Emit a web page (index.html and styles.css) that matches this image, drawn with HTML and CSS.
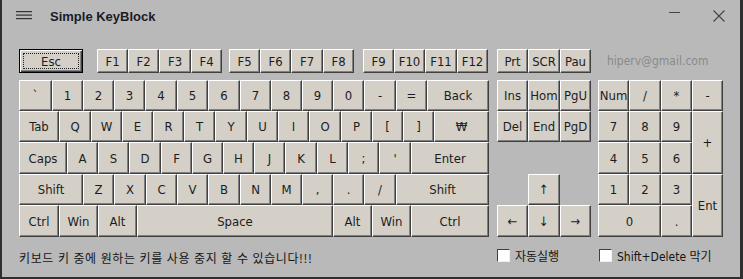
FILE: index.html
```html
<!DOCTYPE html>
<html lang="ko">
<head>
<meta charset="utf-8">
<title>Simple KeyBlock</title>
<link rel="stylesheet" href="styles.css">
</head>
<body>
<div class="window">
  <header class="titlebar">
    <svg class="menu-icon" width="16" height="10" viewBox="0 0 16 10"><rect x="0" y="0" width="16" height="1.2" fill="#333"/><rect x="0" y="3.5" width="16" height="1.2" fill="#333"/><rect x="0" y="7" width="16" height="1.2" fill="#333"/></svg>
    <span class="title">Simple KeyBlock</span>
    <span class="spacer"></span>
    <svg class="min-icon" width="12" height="12" viewBox="0 0 12 12"><rect x="0" y="5" width="11" height="1" fill="#444"/></svg>
    <svg class="close-icon" width="12" height="12" viewBox="0 0 12 12"><path d="M0.5 0.5 L11.5 11.5 M11.5 0.5 L0.5 11.5" stroke="#444" stroke-width="1.1" fill="none"/></svg>
  </header>
  <div class="content">
    <div class="frow">
      <div class="key esc">Esc</div>
      <div class="fgroup g1">
        <div class="key">F1</div><div class="key">F2</div><div class="key">F3</div><div class="key">F4</div>
      </div>
      <div class="fgroup g2">
        <div class="key">F5</div><div class="key">F6</div><div class="key">F7</div><div class="key">F8</div>
      </div>
      <div class="fgroup g3">
        <div class="key">F9</div><div class="key">F10</div><div class="key">F11</div><div class="key">F12</div>
      </div>
      <div class="sysgroup">
        <div class="key">Prt</div><div class="key">SCR</div><div class="key">Pau</div>
      </div>
      <span class="email">hiperv@gmail.com</span>
    </div>
    <div class="board">
      <div class="main">
        <div class="row r1">
          <div class="key">`</div><div class="key">1</div><div class="key">2</div><div class="key">3</div><div class="key">4</div><div class="key">5</div><div class="key">6</div><div class="key">7</div><div class="key">8</div><div class="key">9</div><div class="key">0</div><div class="key">-</div><div class="key">=</div><div class="key">Back</div>
        </div>
        <div class="row r2">
          <div class="key">Tab</div><div class="key">Q</div><div class="key">W</div><div class="key">E</div><div class="key">R</div><div class="key">T</div><div class="key">Y</div><div class="key">U</div><div class="key">I</div><div class="key">O</div><div class="key">P</div><div class="key">[</div><div class="key">]</div><div class="key">₩</div>
        </div>
        <div class="row r3">
          <div class="key">Caps</div><div class="key">A</div><div class="key">S</div><div class="key">D</div><div class="key">F</div><div class="key">G</div><div class="key">H</div><div class="key">J</div><div class="key">K</div><div class="key">L</div><div class="key">;</div><div class="key">'</div><div class="key">Enter</div>
        </div>
        <div class="row r4">
          <div class="key">Shift</div><div class="key">Z</div><div class="key">X</div><div class="key">C</div><div class="key">V</div><div class="key">B</div><div class="key">N</div><div class="key">M</div><div class="key">,</div><div class="key">.</div><div class="key">/</div><div class="key">Shift</div>
        </div>
        <div class="row r5">
          <div class="key">Ctrl</div><div class="key">Win</div><div class="key">Alt</div><div class="key">Space</div><div class="key">Alt</div><div class="key">Win</div><div class="key">Ctrl</div>
        </div>
      </div>
      <div class="nav">
        <div class="key">Ins</div><div class="key">Hom</div><div class="key">PgU</div>
        <div class="key">Del</div><div class="key">End</div><div class="key">PgD</div>
        <div class="key up">↑</div>
        <div class="key left">←</div><div class="key down">↓</div><div class="key right">→</div>
      </div>
      <div class="numpad">
        <div class="key">Num</div><div class="key">/</div><div class="key">*</div><div class="key">-</div>
        <div class="key">7</div><div class="key">8</div><div class="key">9</div><div class="key plus">+</div>
        <div class="key">4</div><div class="key">5</div><div class="key">6</div>
        <div class="key">1</div><div class="key">2</div><div class="key">3</div><div class="key ent">Ent</div>
        <div class="key zero">0</div><div class="key">.</div>
      </div>
    </div>
    <div class="footer">
      <span class="msg">키보드 키 중에 원하는 키를 사용 중지 할 수 있습니다!!!</span>
      <label class="check auto"><span class="box"></span>자동실행</label>
      <label class="check shiftdel"><span class="box"></span>Shift+Delete 막기</label>
    </div>
  </div>
</div>
</body>
</html>
```

FILE: styles.css
```css
* { box-sizing: border-box; }
html, body { margin: 0; padding: 0; }
body {
  width: 743px;
  height: 279px;
  background: #b9b9b9;
  font-family: "Liberation Sans", Arial, sans-serif;
  overflow: hidden;
}
.window {
  width: 743px;
  height: 279px;
  background: #b9b9b9;
  border-left: 2px solid #2f2f2f;
  border-right: 3px solid #2f2f2f;
  border-bottom: 2px solid #2f2f2f;
  display: flex;
  flex-direction: column;
}
.titlebar {
  height: 36px;
  display: flex;
  align-items: center;
  padding-left: 14px;
  padding-right: 15px;
}
.menu-icon { display: block; margin-top: -4px; }
.title {
  margin-left: 18px;
  margin-top: -4px;
  font: bold 13px "Liberation Sans", Arial, sans-serif;
  color: #1b1b28;
}
.spacer { flex: 1; }
.min-icon { display: block; margin-top: -10px; }
.close-icon { display: block; margin-left: 32px; margin-top: -4px; }

.content {
  padding-left: 17px;
  padding-top: 13px;
}

.key {
  background: #d4d0c8;
  border: 1px solid;
  border-color: #ffffff #404040 #404040 #ffffff;
  box-shadow: inset -1px -1px 0 #808080;
  display: flex;
  align-items: center;
  justify-content: center;
  font: 13px "Liberation Sans Narrow", "DejaVu Sans Condensed", "Liberation Sans", sans-serif;
  color: #1c1c1c;
  white-space: nowrap;
  height: 100%;
}

.frow {
  display: flex;
  height: 24px;
  align-items: stretch;
}
.esc {
  width: 64px;
  border-color: #000;
  box-shadow: inset 1px 1px 0 #fff, inset -1px -1px 0 #404040, inset -2px -2px 0 #808080;
  position: relative;
}
.esc::after {
  content: "";
  position: absolute;
  left: 3px; top: 3px; right: 3px; bottom: 3px;
  border: 1px dotted #222;
}
.fgroup {
  display: grid;
  grid-template-columns: 31px 31px 32px 31px;
}
.g1 { margin-left: 14px; }
.g2 { margin-left: 7px; }
.g3 { margin-left: 9px; }
.sysgroup {
  margin-left: 9px;
  display: grid;
  grid-template-columns: 31px 32px 31px;
}
.email {
  margin-left: 16px;
  align-self: center;
  font: 12px "Liberation Sans Narrow", "DejaVu Sans Condensed", "Liberation Sans", sans-serif;
  color: #8a8a8a;
  margin-top: -1px;
}

.board {
  margin-top: 7px;
  display: flex;
  height: 157px;
}
.main {
  width: 470px;
  display: grid;
  grid-template-rows: 31px 31px 32px 31px 32px;
}
.row { display: grid; }
.r1 { grid-template-columns: 33px 31px 31px 31px 32px 31px 32px 31px 31px 31px 31px 32px 31px 62px; }
.r2 { grid-template-columns: 40px 32px 31px 31px 31px 31px 32px 31px 31px 32px 31px 31px 31px 55px; }
.r3 { grid-template-columns: 48px 31px 31px 32px 31px 31px 31px 31px 32px 31px 31px 32px 78px; }
.r4 { grid-template-columns: 64px 31px 32px 31px 31px 32px 31px 31px 31px 31px 32px 93px; }
.r5 { grid-template-columns: 40px 39px 39px 196px 39px 39px 78px; }

.nav {
  margin-left: 8px;
  width: 94px;
  display: grid;
  grid-template-columns: 31px 32px 31px;
  grid-template-rows: 31px 31px 32px 31px 32px;
}
.nav .up { grid-column: 2; grid-row: 4; }
.nav .left { grid-column: 1; grid-row: 5; }
.nav .down { grid-column: 2; grid-row: 5; }
.nav .right { grid-column: 3; grid-row: 5; }

.numpad {
  margin-left: 7px;
  width: 125px;
  display: grid;
  grid-template-columns: 31px 32px 31px 31px;
  grid-template-rows: 31px 31px 32px 31px 32px;
}
.numpad .plus { grid-column: 4; grid-row: 2 / span 2; }
.numpad .ent { grid-column: 4; grid-row: 4 / span 2; }
.numpad .zero { grid-column: 1 / span 2; }

.footer {
  margin-top: 11px;
  height: 14px;
  display: flex;
  align-items: center;
}
.msg {
  width: 478px;
  font: 12px "Noto Sans CJK KR", sans-serif;
  letter-spacing: 0.6px;
  color: #141414;
  margin-top: 4px;
}
.check {
  display: flex;
  align-items: center;
  font: 12px "Liberation Sans Narrow", "DejaVu Sans Condensed", "Noto Sans CJK KR", sans-serif;
  color: #141414;
}
.check.auto { width: 102px; }
.box {
  width: 13px;
  height: 13px;
  background: #fff;
  border: 1px solid;
  border-color: #404040 #f0f0f0 #f0f0f0 #404040;
  margin-right: 5px;
}
```
